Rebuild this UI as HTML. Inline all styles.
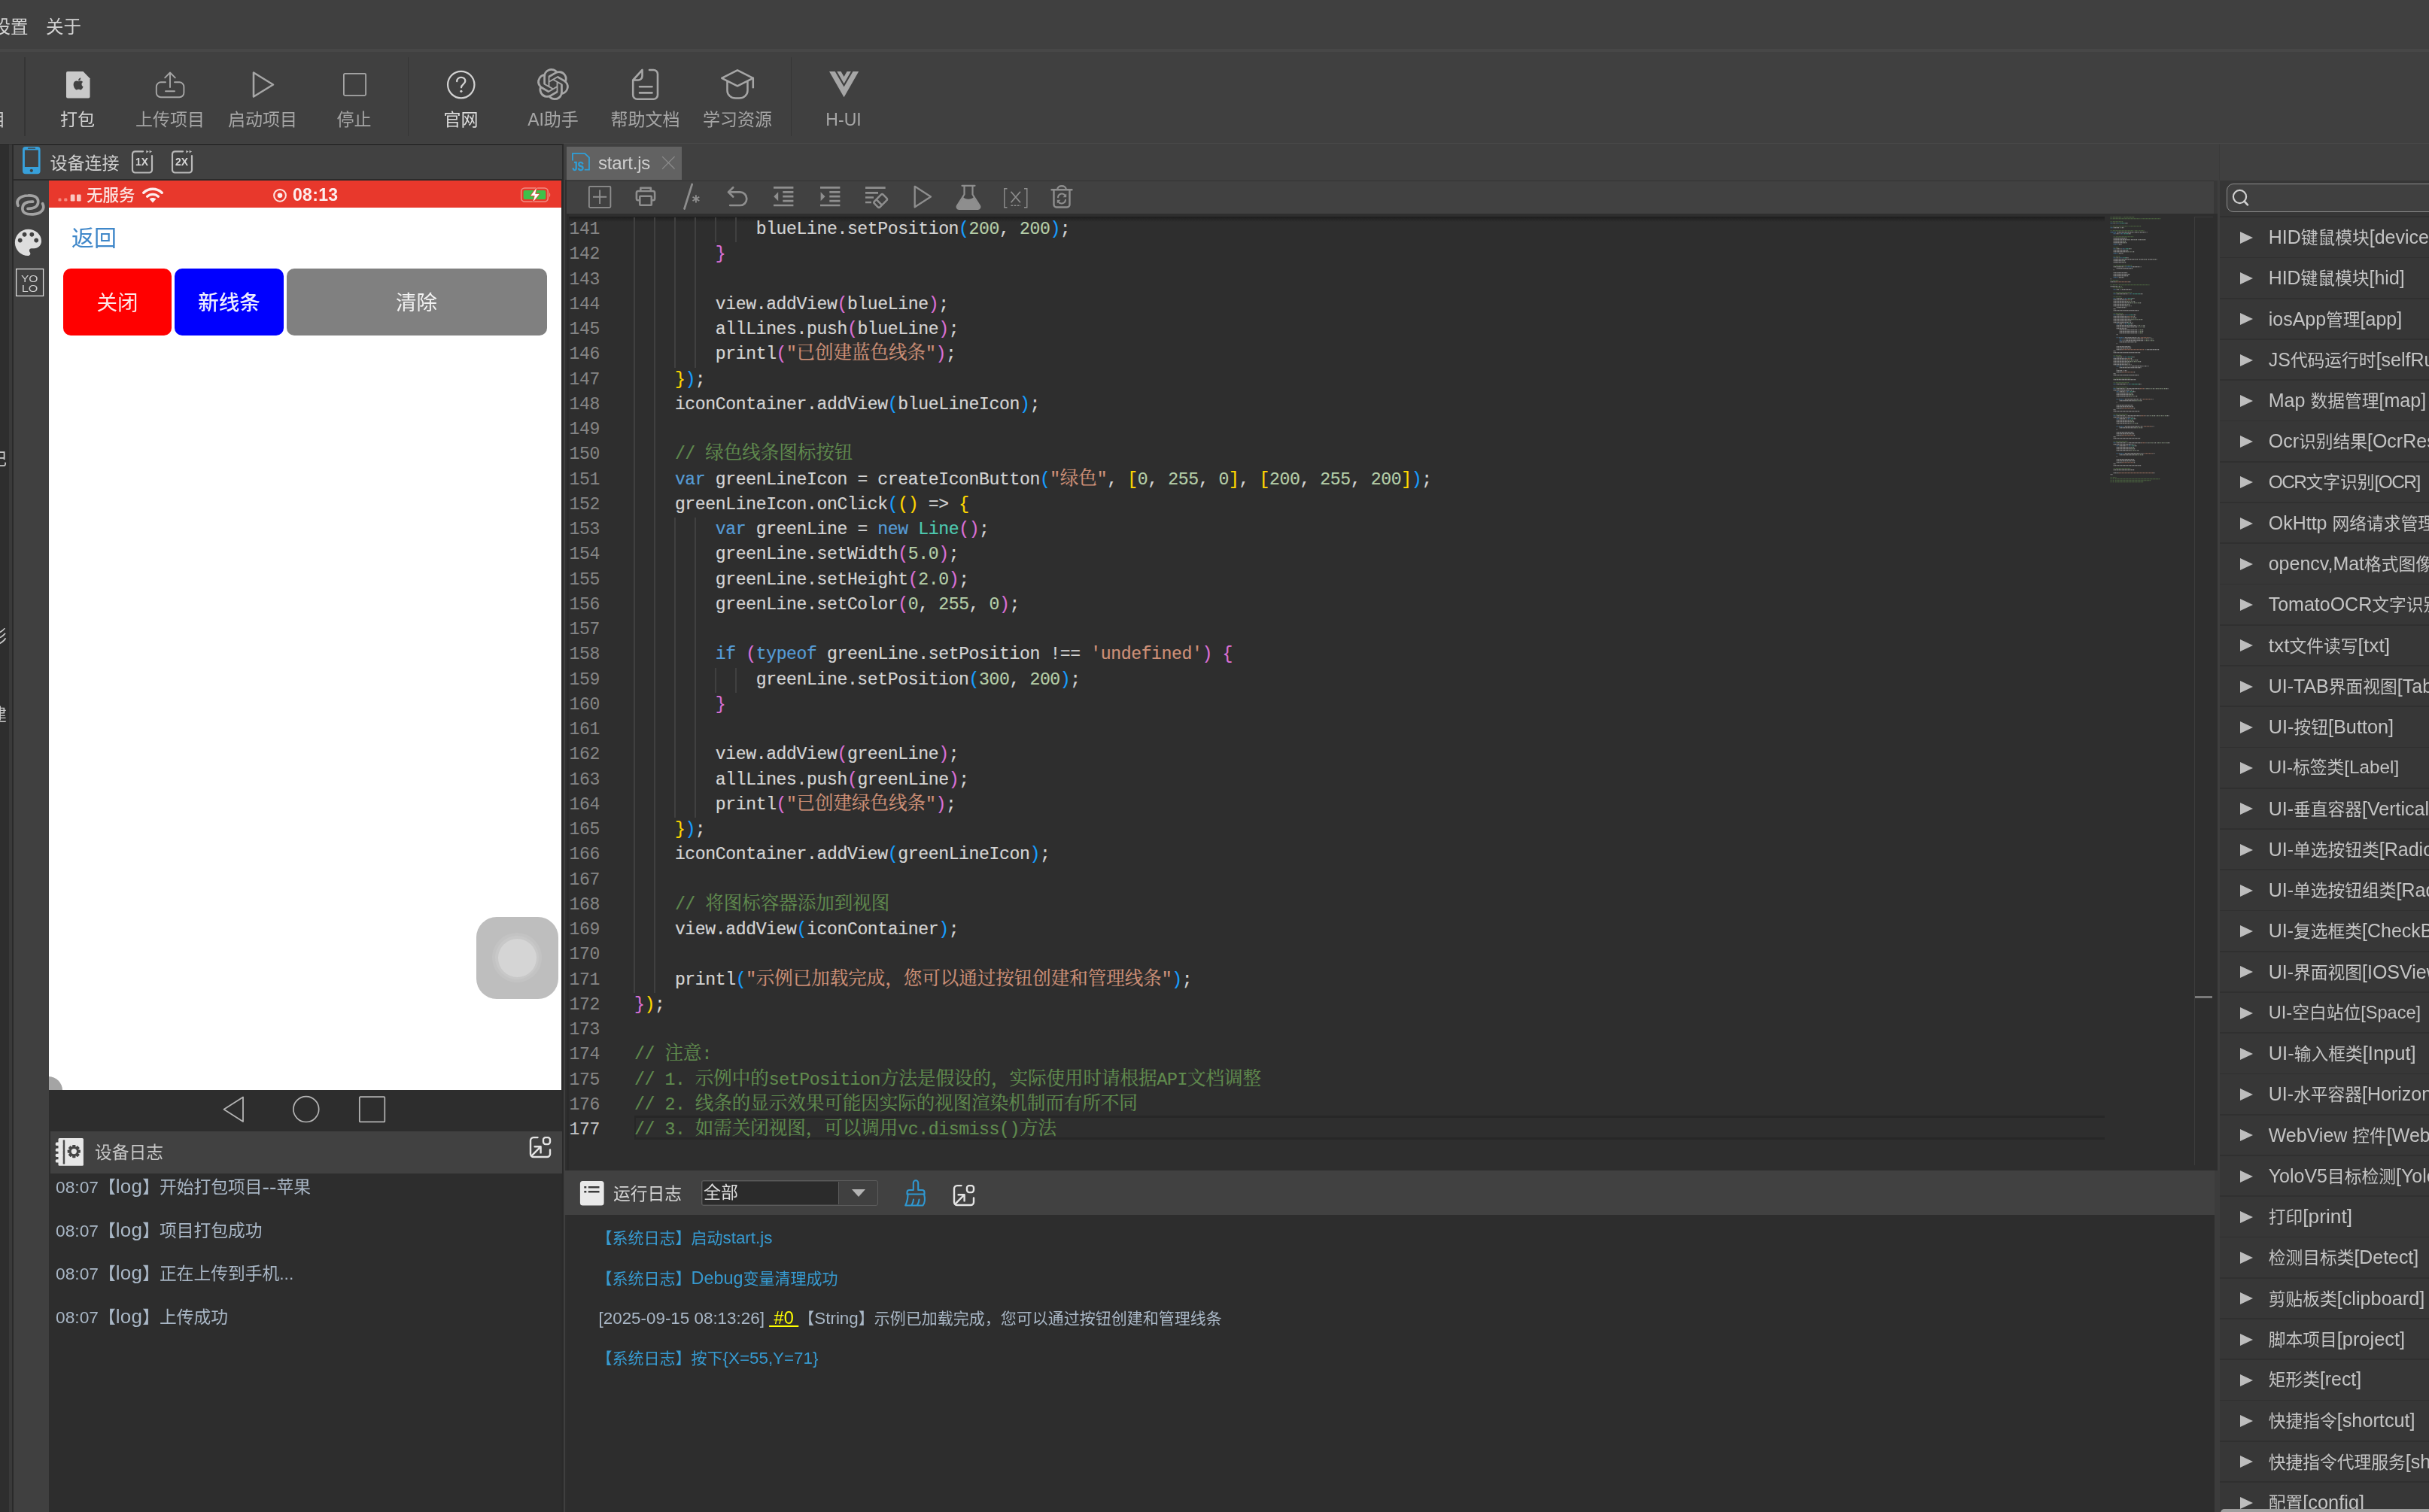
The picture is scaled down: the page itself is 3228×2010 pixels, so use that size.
<!DOCTYPE html>
<html lang="zh-CN"><head><meta charset="utf-8"><title>IDE</title>
<style>
html,body{margin:0;padding:0;}
body{width:3228px;height:2010px;overflow:hidden;background:#404040;position:relative;font-family:"Liberation Sans","Noto Sans CJK SC",sans-serif;color:#c8c8c8;}
.a{position:absolute;}
.t{position:absolute;white-space:nowrap;line-height:1;}
.ph{filter:blur(0.4px);}
svg{position:absolute;overflow:visible;}
.tb{position:absolute;white-space:nowrap;line-height:1;font-size:23px;color:#a6a6a6;transform:translateX(-50%);}
.code{position:absolute;left:843px;white-space:pre;font-family:"Liberation Mono","Noto Serif CJK SC",monospace;font-size:23.1px;letter-spacing:-0.387px;line-height:33.25px;height:33.25px;color:#d4d4d4;-webkit-text-stroke:0.2px;}
.code .z{font-family:"Noto Serif CJK SC",serif;font-size:24.5px;line-height:1;letter-spacing:0;}
.ln{position:absolute;left:740.5px;width:56.5px;text-align:right;font-family:"Liberation Mono","Noto Serif CJK SC",monospace;font-size:23.1px;letter-spacing:-0.387px;line-height:33.25px;height:33.25px;color:#858585;}
.k{color:#569cd6}.s{color:#ce9178}.n{color:#b5cea8}.c{color:#608b4e}.ty{color:#4ec9b0}
.b1{color:#ffd700}.b2{color:#da70d6}.b3{color:#179fff}
.g{position:absolute;width:1.75px;background:#404040;}
.row{position:absolute;left:2950px;width:278px;height:52.5px;background:#373737;}
.row .x{position:absolute;left:64.7px;top:0;height:52.5px;line-height:52.5px;font-size:22.75px;white-space:nowrap;color:#c4c4c4;}
.row i{position:absolute;left:27px;top:18.8px;width:0;height:0;border-left:17px solid #bdbdbd;border-top:8.5px solid transparent;border-bottom:8.5px solid transparent;}
.dl{position:absolute;left:74px;font-size:22.75px;line-height:1;white-space:nowrap;color:#a9b7c6;}
.rl{position:absolute;font-size:21px;line-height:1;white-space:nowrap;color:#369ad0;}
</style></head>
<body>
<div id="app" style="position:absolute;left:0;top:0;width:3228px;height:2010px;will-change:transform">
<div class="a" style="left:0;top:0;width:3228px;height:65px;background:#404040"></div>
<div class="t" style="left:-9.5px;top:24.5px;font-size:23.5px;color:#d2d2d2">设置</div>
<div class="t" style="left:61px;top:24.5px;font-size:23.5px;color:#d2d2d2">关于</div>
<div class="a" style="left:0;top:65px;width:3228px;height:3.5px;background:#474747"></div>
<div class="a" style="left:32px;top:76px;width:1.75px;height:105px;background:#353535"></div>
<div class="a" style="left:541.5px;top:76px;width:1.75px;height:105px;background:#353535"></div>
<div class="a" style="left:1050.5px;top:76px;width:1.75px;height:105px;background:#353535"></div>
<div class="t" style="left:-15.5px;top:147.5px;font-size:23px;color:#c8c8c8">目</div>
<div class="tb" style="left:103px;top:147.5px;color:#d0d0d0">打包</div>
<div class="tb" style="left:226px;top:147.5px;color:#a6a6a6">上传项目</div>
<div class="tb" style="left:349px;top:147.5px;color:#a6a6a6">启动项目</div>
<div class="tb" style="left:470.5px;top:147.5px;color:#a6a6a6">停止</div>
<div class="tb" style="left:612.5px;top:147.5px;color:#dcdcdc">官网</div>
<div class="tb" style="left:735px;top:147.5px;color:#a6a6a6">AI助手</div>
<div class="tb" style="left:857.5px;top:147.5px;color:#a6a6a6">帮助文档</div>
<div class="tb" style="left:980px;top:147.5px;color:#a6a6a6">学习资源</div>
<div class="tb" style="left:1121px;top:147.5px;color:#a6a6a6">H-UI</div>
<svg style="left:87.8px;top:94.6px" width="31.5" height="35.6" viewBox="0 0 31.5 35.6"><path d="M2 0H22.5L31.5 9.2V33.6a2 2 0 0 1-2 2H2a2 2 0 0 1-2-2V2a2 2 0 0 1 2-2z" fill="#c9c9c9"/><g transform="translate(8.2,8.6) scale(0.66)"><path d="M12.152 6.896c-.948 0-2.415-1.078-3.96-1.04-2.04.027-3.91 1.183-4.961 3.014-2.117 3.675-.546 9.103 1.519 12.09 1.013 1.454 2.208 3.09 3.792 3.039 1.52-.065 2.09-.987 3.935-.987 1.831 0 2.35.987 3.96.948 1.637-.026 2.676-1.48 3.676-2.948 1.156-1.688 1.636-3.325 1.662-3.415-.039-.013-3.182-1.221-3.22-4.857-.026-3.04 2.48-4.494 2.597-4.559-1.429-2.09-3.623-2.324-4.39-2.376-2-.156-3.675 1.09-4.61 1.09zM15.53 3.83c.843-1.012 1.4-2.427 1.245-3.83-1.207.052-2.662.805-3.532 1.818-.78.896-1.454 2.338-1.273 3.714 1.338.104 2.715-.688 3.559-1.701" fill="#404040"/></g></svg>
<svg style="left:205px;top:94px" width="42" height="38" viewBox="0 0 42 38"><g fill="none" stroke="#a6a6a6" stroke-width="1.9" stroke-linecap="round" stroke-linejoin="round"><path d="M15 15.3H8.8a6 6 0 0 0-6 6v8a6 6 0 0 0 6 6h24.6a6 6 0 0 0 6-6v-8a6 6 0 0 0-6-6H27"/><path d="M21 2.5V22M14.2 9.3L21 2.5l6.8 6.8M15 27.3h12"/></g></svg>
<svg style="left:334px;top:93px" width="32" height="39" viewBox="0 0 32 39"><path d="M3 3.5L29 19.5L3 35.5z" fill="none" stroke="#a6a6a6" stroke-width="2.6" stroke-linejoin="round"/></svg>
<svg style="left:455.5px;top:97px" width="31" height="30.7" viewBox="0 0 31 30.7"><rect x="0.9" y="0.9" width="29.2" height="28.9" rx="1.5" fill="none" stroke="#a6a6a6" stroke-width="1.8"/></svg>
<svg style="left:592.8px;top:92.8px" width="39.5" height="39.5" viewBox="0 0 39.5 39.5"><circle cx="19.75" cy="19.6" r="17.7" fill="none" stroke="#d2d2d2" stroke-width="2.2"/><path d="M14.2 15.2c0-3.3 2.4-5.4 5.6-5.4s5.5 2 5.5 4.9c0 4-5.3 4.2-5.3 8.6" fill="none" stroke="#d2d2d2" stroke-width="2.3" stroke-linecap="round"/><circle cx="19.9" cy="28.3" r="1.6" fill="#d2d2d2"/></svg>
<svg style="left:714.2px;top:91.3px" width="42" height="42" viewBox="0 0 24 24"><path d="M22.2819 9.8211a5.9847 5.9847 0 0 0-.5157-4.9108 6.0462 6.0462 0 0 0-6.5098-2.9A6.0651 6.0651 0 0 0 4.9807 4.1818a5.9847 5.9847 0 0 0-3.9977 2.9 6.0462 6.0462 0 0 0 .7427 7.0966 5.98 5.98 0 0 0 .511 4.9107 6.051 6.051 0 0 0 6.5146 2.9001A5.9847 5.9847 0 0 0 13.2599 24a6.0557 6.0557 0 0 0 5.7718-4.2058 5.9894 5.9894 0 0 0 3.9977-2.9001 6.0557 6.0557 0 0 0-.7475-7.0729zm-9.022 12.6081a4.4755 4.4755 0 0 1-2.8764-1.0408l.1419-.0804 4.7783-2.7582a.7948.7948 0 0 0 .3927-.6813v-6.7369l2.02 1.1686a.071.071 0 0 1 .038.052v5.5826a4.504 4.504 0 0 1-4.4945 4.4944zm-9.6607-4.1254a4.4708 4.4708 0 0 1-.5346-3.0137l.142.0852 4.783 2.7582a.7712.7712 0 0 0 .7806 0l5.8428-3.3685v2.3324a.0804.0804 0 0 1-.0332.0615L9.74 19.9502a4.4992 4.4992 0 0 1-6.1408-1.6464zM2.3408 7.8956a4.485 4.485 0 0 1 2.3655-1.9728V11.6a.7664.7664 0 0 0 .3879.6765l5.8144 3.3543-2.0201 1.1685a.0757.0757 0 0 1-.071 0l-4.8303-2.7865A4.504 4.504 0 0 1 2.3408 7.872zm16.5963 3.8558L13.1038 8.364 15.1192 7.2a.0757.0757 0 0 1 .071 0l4.8303 2.7913a4.4944 4.4944 0 0 1-.6765 8.1042v-5.6772a.79.79 0 0 0-.407-.667zm2.0107-3.0231l-.142-.0852-4.7735-2.7818a.7759.7759 0 0 0-.7854 0L9.409 9.2297V6.8974a.0662.0662 0 0 1 .0284-.0615l4.8303-2.7866a4.4992 4.4992 0 0 1 6.6802 4.66zM8.3065 12.863l-2.02-1.1638a.0804.0804 0 0 1-.038-.0567V6.0742a4.4992 4.4992 0 0 1 7.3757-3.4537l-.142.0805L8.704 5.459a.7948.7948 0 0 0-.3927.6813zm1.0976-2.3654l2.602-1.4998 2.6069 1.4998v2.9994l-2.5974 1.4997-2.6067-1.4997Z" fill="#a6a6a6"/></svg>
<svg style="left:838px;top:90px" width="40" height="45" viewBox="0 0 40 45"><g fill="none" stroke="#a6a6a6" stroke-width="2.6" stroke-linecap="round" stroke-linejoin="round"><path d="M25 3h5.5a5.5 5.5 0 0 1 5.5 5.5v27.7a5.500 5.500 0 0 1-5.500 5.500H8.700a5.500 5.500 0 0 1-5.500-5.500V16.500L15.500 3v8a5.500 5.500 0 0 1-5.500 5.500H3.500"/><path d="M12 25.200h16.500M12 33.400h16.500"/></g></svg>
<svg style="left:956px;top:90px" width="49" height="44" viewBox="0 0 49 44"><g fill="none" stroke="#a6a6a6" stroke-width="2.5" stroke-linecap="round" stroke-linejoin="round"><path d="M24 3.300L3.200 13.800L24 24.300L44.800 13.800z"/><path d="M10.500 18v12.500c0 5.500 5 10 11 10h5c6 0 11-4.500 11-10V18"/><path d="M44.800 13.800v12.500"/></g></svg>
<svg style="left:1102.4px;top:94.8px" width="39.2" height="34.2" viewBox="0 0 39.2 34.2"><path d="M0 0H7.700L19.600 20.500L31.500 0H39.200L19.600 34.200z" fill="#a6a6a6"/><path d="M10.300 0H15.600L19.600 7L23.600 0H28.900L19.600 16.200z" fill="#a6a6a6"/></svg>
<div class="a" style="left:0;top:189.8px;width:3228px;height:1.3px;background:#494949"></div>
<div class="a" style="left:0;top:191.1px;width:749.2px;height:2px;background:#292929"></div>
<div class="a" style="left:0;top:192px;width:11.7px;height:1818px;background:#2e2e2e"></div>
<div class="a" style="left:11.7px;top:192px;width:4.3px;height:1818px;background:#3a3a3a"></div>
<div class="a" style="left:16px;top:192px;width:1.6px;height:1818px;background:#2a2a2a"></div>
<div class="a" style="left:17.5px;top:193px;width:729.8px;height:45px;background:#414141"></div>
<div class="a" style="left:17.5px;top:238px;width:731.7px;height:2px;background:#2b2b2b"></div>
<div class="t" style="left:66.5px;top:205.5px;font-size:23px;color:#cfcfcf">设备连接</div>
<svg style="left:29.5px;top:195px" width="23.6" height="36.2" viewBox="0 0 23.6 36.2"><path fill-rule="evenodd" fill="#38a0da" d="M4 0H19.600a4 4 0 0 1 4 4V32.200a4 4 0 0 1-4 4H4a4 4 0 0 1-4-4V4a4 4 0 0 1 4-4zM2.900 4.600V27H20.900V4.600zM7.500 1.600a.6.6 0 0 0 0 1.200H16.500a.6.600 0 0 0 0-1.200zM11.800 29.700a2.100 2.100 0 1 0 .01 0z"/></svg>
<svg style="left:174.3px;top:198px" width="31" height="33" viewBox="0 0 31 33"><path d="M16 3.300H5.500a3.500 3.500 0 0 0-3.500 3.500V28a3.500 3.500 0 0 0 3.500 3.500H24.500a3.500 3.500 0 0 0 3.500-3.500V9" fill="none" stroke="#b9b9b9" stroke-width="2.2" stroke-linecap="round"/><path d="M20.300 1.800L23.800 3.600L20.300 5.400zM24.600 1.800L28.100 3.600L24.600 5.400z" fill="#b9b9b9"/><text x="14.600" y="21.900" font-family="Liberation Sans,sans-serif" font-size="14.500" font-weight="bold" text-anchor="middle" fill="#d6d6d6" textLength="17" lengthAdjust="spacingAndGlyphs">1X</text></svg>
<svg style="left:226.6px;top:198px" width="31" height="33" viewBox="0 0 31 33"><path d="M16 3.300H5.500a3.500 3.500 0 0 0-3.500 3.500V28a3.500 3.500 0 0 0 3.500 3.500H24.500a3.500 3.500 0 0 0 3.500-3.500V9" fill="none" stroke="#b9b9b9" stroke-width="2.2" stroke-linecap="round"/><path d="M20.300 1.800L23.800 3.600L20.300 5.400zM24.600 1.800L28.100 3.600L24.600 5.400z" fill="#b9b9b9"/><text x="14.600" y="21.900" font-family="Liberation Sans,sans-serif" font-size="14.500" font-weight="bold" text-anchor="middle" fill="#d6d6d6" textLength="17" lengthAdjust="spacingAndGlyphs">2X</text></svg>
<div class="a" style="left:17.5px;top:240px;width:47.5px;height:1770px;background:#404040"></div>
<svg style="left:17.5px;top:255px" width="47" height="36" viewBox="0 0 47 36"><g fill="none" stroke="#a2a2a2" stroke-width="3.700" stroke-linecap="round"><path d="M6 18.300C2.500 10.500 9 5.200 19 5C29 4.500 33.500 8 32.600 14.800C31.800 20.500 25.500 22.500 19 22.300"/><path d="M38.600 15.700C42.500 23.500 36 29.500 26 29.800C16 30.200 11 27.500 12 20.700C12.800 15 19 13 25.700 13.200"/></g></svg>
<svg style="left:13.6px;top:298.7px" width="46.92" height="46.92" viewBox="0 0 24 24"><path d="M12 3c-4.97 0-9 4.03-9 9s4.03 9 9 9c.83 0 1.5-.67 1.5-1.5 0-.39-.15-.74-.39-1.01-.23-.26-.38-.61-.38-.99 0-.83.67-1.5 1.5-1.5H16c2.76 0 5-2.24 5-5 0-4.42-4.03-8-9-8zm-5.5 9c-.83 0-1.5-.67-1.5-1.5S5.67 9 6.5 9 8 9.67 8 10.5 7.33 12 6.5 12zm3-4C8.67 8 8 7.33 8 6.5S8.67 5 9.5 5s1.5.67 1.5 1.5S10.33 8 9.5 8zm5 0c-.83 0-1.5-.67-1.5-1.5S13.67 5 14.5 5s1.5.67 1.5 1.5S15.33 8 14.5 8zm3 4c-.83 0-1.5-.67-1.5-1.5S16.67 9 17.5 9s1.5.67 1.5 1.5-.67 1.5-1.5 1.5z" fill="#dddddd"/></svg>
<svg style="left:21px;top:357.2px" width="37.2" height="37" viewBox="0 0 37.2 37"><rect x="0.600" y="0.600" width="36" height="35.800" fill="none" stroke="#dadada" stroke-width="1.300"/><text x="18.200" y="17.800" font-family="Liberation Sans,sans-serif" font-size="13" text-anchor="middle" fill="#cdcdcd" textLength="22.600" lengthAdjust="spacingAndGlyphs">YO</text><text x="18.600" y="31.100" font-family="Liberation Sans,sans-serif" font-size="13" text-anchor="middle" fill="#cdcdcd" textLength="21.500" lengthAdjust="spacingAndGlyphs">LO</text></svg>
<div class="a" style="left:65px;top:240px;width:681px;height:1209px;background:#fff"></div>
<div class="a" style="left:65px;top:240px;width:681px;height:36px;background:#e8382c"></div>
<div class="t ph" style="left:115px;top:249.5px;font-size:21.5px;color:#fbe4e1;font-weight:500">无服务</div>
<div class="t ph" style="left:389px;top:248.4px;font-size:23px;color:#fdeeee;font-weight:bold;letter-spacing:0.3px">08:13</div>
<svg style="left:77px;top:250px" width="32" height="19" viewBox="0 0 32 19"><g fill="#f58a80"><rect x="0.500" y="13.400" width="4" height="4.200" rx="1.300"/><rect x="8.200" y="13.400" width="4.200" height="4.200" rx="1.300"/></g><g fill="#fac6c0"><rect x="16.700" y="8.400" width="5.800" height="9.200" rx="1.400"/><rect x="25" y="8.400" width="5.600" height="9.200" rx="1.400"/></g></svg>
<svg style="left:188px;top:248px" width="30" height="23" viewBox="0 0 30 23"><g fill="none" stroke="#fdeeee" stroke-linecap="round"><path d="M2.800 8.200C9.500 1.500 20.500 1.500 27.200 8.200" stroke-width="3.400"/><path d="M7.600 13.200C11.800 9.300 18.200 9.300 22.400 13.200" stroke-width="3.300"/></g><path d="M15 21.500L10.600 16.600C13 14.600 17 14.600 19.400 16.600z" fill="#fdeeee"/></svg>
<svg style="left:361.5px;top:250px" width="20" height="20" viewBox="0 0 20 20"><circle cx="10" cy="9.800" r="7.900" fill="none" stroke="#fde3e0" stroke-width="2"/><circle cx="10" cy="9.800" r="3.300" fill="#fdeeee"/></svg>
<svg style="left:691px;top:247.5px" width="42" height="22" viewBox="0 0 42 22"><rect x="1.700" y="2" width="35.500" height="18" rx="4.500" fill="none" stroke="#f08a80" stroke-width="1.600"/><rect x="4.600" y="4.900" width="29.700" height="12.200" rx="2.200" fill="#3fc04a"/><path d="M39 8v6c1.600-.5 1.600-5.500 0-6z" fill="#f08a80"/><path d="M23 -0.200L13.500 12.500H19.200L16.500 22.200L26.600 9.400H20.700z" fill="#fff" stroke="#e8382c" stroke-width="0.900"/></svg>
<div class="t ph" style="left:95px;top:301.5px;font-size:30px;color:#3f87c9">返回</div>
<div class="a" style="left:84px;top:356.5px;width:144px;height:89.5px;border-radius:10px;background:#ff0000"></div>
<div class="a" style="left:232px;top:356.5px;width:145px;height:89.5px;border-radius:10px;background:#0000ff"></div>
<div class="a" style="left:381px;top:356.5px;width:346px;height:89.5px;border-radius:10px;background:#808080"></div>
<div class="t ph" style="left:156px;top:388.5px;font-size:27.5px;color:#fde8e8;transform:translateX(-50%)">关闭</div>
<div class="t ph" style="left:304.5px;top:388.5px;font-size:27.5px;color:#ececff;font-weight:500;transform:translateX(-50%)">新线条</div>
<div class="t ph" style="left:553.5px;top:388.5px;font-size:27.5px;color:#f2f2f2;transform:translateX(-50%)">清除</div>
<div class="a" style="left:633.3px;top:1218.7px;width:108.4px;height:109.3px;border-radius:27px;background:#bebebe"></div>
<div class="a" style="left:654.4px;top:1240.3px;width:66px;height:66px;border-radius:50%;background:#c3c3c3"></div>
<div class="a" style="left:658.4px;top:1244.3px;width:58px;height:58px;border-radius:50%;background:#c8c8c8"></div>
<div class="a" style="left:661.9px;top:1247.8px;width:51px;height:51px;border-radius:50%;background:#d5d5d5"></div>
<div class="a" style="left:65px;top:1430px;width:18px;height:19px;overflow:hidden"><div class="a" style="left:-19px;top:1px;width:37px;height:37px;border-radius:50%;background:#a4a4a4"></div></div>
<div class="a" style="left:65px;top:1449px;width:681px;height:55px;background:#2d2d2d"></div>
<svg style="left:294px;top:1455px" width="33" height="40" viewBox="0 0 33 40"><path d="M29 3.500V36L3.500 19.800z" fill="none" stroke="#b4b4b4" stroke-width="1.800" stroke-linejoin="round"/></svg>
<svg style="left:387px;top:1455px" width="40" height="40" viewBox="0 0 40 40"><circle cx="19.800" cy="19.600" r="16.900" fill="none" stroke="#b4b4b4" stroke-width="1.700"/></svg>
<svg style="left:476px;top:1456px" width="38" height="38" viewBox="0 0 38 38"><rect x="1.800" y="2.200" width="33.500" height="33.200" rx="1" fill="none" stroke="#b4b4b4" stroke-width="1.700"/></svg>
<div class="a" style="left:65px;top:1504px;width:681px;height:506px;background:#2d2d2d"></div>
<div class="a" style="left:67px;top:1504px;width:679px;height:55.5px;background:#414141"></div>
<div class="t" style="left:126px;top:1520.5px;font-size:22.75px;color:#c8c8c8">设备日志</div>
<svg style="left:73px;top:1512px" width="39" height="39" viewBox="0 0 39 39"><rect x="4.500" y="1" width="33.400" height="36.800" rx="1.500" fill="#e7e7e7"/><rect x="10.700" y="3.500" width="2.500" height="32" fill="#4a4a4a"/><g fill="#e7e7e7"><rect x="0.800" y="6.600" width="9.500" height="4.300" rx="1.500"/><rect x="0.800" y="14.400" width="9.500" height="4.300" rx="1.500"/><rect x="0.800" y="21.800" width="9.500" height="4.300" rx="1.500"/><rect x="0.800" y="29.200" width="9.500" height="4.300" rx="1.500"/></g><g transform="translate(25.300,18.600)"><g fill="#454545"><rect x="-2.200" y="-8.600" width="4.400" height="17.200" rx="0.800" transform="rotate(0)"/><rect x="-2.200" y="-8.600" width="4.400" height="17.200" rx="0.800" transform="rotate(45)"/><rect x="-2.200" y="-8.600" width="4.400" height="17.200" rx="0.800" transform="rotate(90)"/><rect x="-2.200" y="-8.600" width="4.400" height="17.200" rx="0.800" transform="rotate(135)"/><circle r="6.300"/></g><circle r="3.600" fill="#e7e7e7"/></g></svg>
<svg style="left:703px;top:1509.8px" width="31" height="31" viewBox="0 0 31 31"><g fill="none" stroke="#e4e4e4" stroke-width="2.4" stroke-linecap="round" stroke-linejoin="round"><path d="M11.500 2.100H6a4 4 0 0 0-4 4V24a4 4 0 0 0 4 4H24a4 4 0 0 0 4-4V18.500"/><rect x="19" y="2.100" width="9" height="9" rx="3"/><path d="M3.600 26.400L15.200 14.700M7.600 14.300H15.600V22.400"/></g></svg>
<div class="dl" style="top:1564.2px">08:07【<span style="font-size:26px;letter-spacing:0.3px">log</span>】开始打包项目<span style="font-size:28.5px;line-height:0;position:relative;top:1.2px">--</span>苹果</div>
<div class="dl" style="top:1621.8px">08:07【<span style="font-size:26px;letter-spacing:0.3px">log</span>】项目打包成功</div>
<div class="dl" style="top:1679.4px">08:07【<span style="font-size:26px;letter-spacing:0.3px">log</span>】正在上传到手机...</div>
<div class="dl" style="top:1737.0px">08:07【<span style="font-size:26px;letter-spacing:0.3px">log</span>】上传成功</div>
<div class="t" style="left:-14px;top:599px;font-size:23px;color:#c8c8c8">记</div>
<div class="t" style="left:-14px;top:834.5px;font-size:23px;color:#c8c8c8">形</div>
<div class="t" style="left:-14px;top:938.5px;font-size:23px;color:#c8c8c8">建</div>
<div class="a" style="left:746px;top:240px;width:1.5px;height:1770px;background:#2c2c2c"></div>
<div class="a" style="left:747.3px;top:191.1px;width:1.9px;height:1819px;background:#2a2a2a"></div>
<div class="a" style="left:749.2px;top:193px;width:1.8px;height:1817px;background:#3f3f3f"></div>
<div class="a" style="left:751px;top:239px;width:1.7px;height:1771px;background:#2f2f2f"></div>
<div class="a" style="left:746px;top:1504px;width:1.4px;height:55.5px;background:#414141"></div>
<div class="a" style="left:752.5px;top:192px;width:2189.5px;height:48px;background:#404040"></div>
<div class="a" style="left:752.5px;top:195px;width:153.5px;height:44px;background:#626262"></div>
<div class="t" style="left:795px;top:205px;font-size:24px;letter-spacing:-0.2px;color:#cfcfcf">start.js</div>
<svg style="left:758px;top:201px" width="28" height="28" viewBox="0 0 28 28"><path d="M2.900 12.400V3.200H19.300L25 8.500V24.600H18.700" fill="none" stroke="#2f9fd8" stroke-width="1.800"/><text x="10.300" y="25.500" font-family="Liberation Sans,sans-serif" font-weight="bold" font-size="16.800" text-anchor="middle" fill="#2f9fd8" stroke="#2f9fd8" stroke-width="0.400" textLength="15.600" lengthAdjust="spacingAndGlyphs">JS</text></svg>
<svg style="left:879px;top:207px" width="19" height="19" viewBox="0 0 19 19"><path d="M1.100 1.100L17.600 17.600M17.600 1.100L1.100 17.600" stroke="#8c8c8c" stroke-width="1.300"/></svg>
<div class="a" style="left:752.5px;top:239.5px;width:2189.5px;height:1px;background:#333"></div>
<div class="a" style="left:752.5px;top:240.5px;width:2189.5px;height:43.5px;background:#414141"></div>
<svg style="left:780.6px;top:245.6px" width="32.4" height="31.6" viewBox="0 0 32.4 31.6"><rect x="1.900" y="1.900" width="28.500" height="27.900" rx="1.200" fill="none" stroke="#8e8e8e" stroke-width="1.800"/><path d="M7 15.800H25.200M16.100 6.600V24.900" stroke="#8e8e8e" stroke-width="1.900"/></svg>
<svg style="left:843px;top:247px" width="30" height="29" viewBox="0 0 30 29"><g fill="none" stroke="#8e8e8e" stroke-width="2.600" stroke-linejoin="round"><path d="M8.300 7V2.800H21.800V7"/><rect x="2.900" y="7" width="24.200" height="12.300" rx="2.300"/><rect x="7.300" y="13.800" width="15.500" height="12" rx="0.800" fill="#414141"/></g></svg>
<svg style="left:905px;top:242px" width="30" height="38" viewBox="0 0 30 38"><path d="M14.700 3L4.500 35.500" stroke="#8e8e8e" stroke-width="2.700" stroke-linecap="round"/><path d="M19.900 17.300V27.500M15.500 19.800L24.300 25M24.300 19.800L15.500 25" stroke="#8e8e8e" stroke-width="1.900"/></svg>
<svg style="left:964px;top:245px" width="33" height="31" viewBox="0 0 33 31"><g fill="none" stroke="#8e8e8e" stroke-width="2.700" stroke-linecap="round" stroke-linejoin="round"><path d="M4.200 10.400H19.500a8.800 8.800 0 0 1 0 17.600H6.200"/><path d="M10.200 4.300L4 10.400L10.200 16.500"/></g></svg>
<svg style="left:1028.2px;top:248.2px" width="27" height="27" viewBox="0 0 27 27"><path d="M0 1.400H26.400M12.300 7.300H26.400M12.300 13.200H26.400M12.300 19.100H26.400M0 25H26.400" stroke="#8e8e8e" stroke-width="2.700"/><path d="M6.200 7.300V19.200L0.300 13.200z" fill="#8e8e8e"/></svg>
<svg style="left:1089.5px;top:248.2px" width="27" height="27" viewBox="0 0 27 27"><path d="M0 1.400H26.400M12.300 7.300H26.400M12.300 13.200H26.400M12.300 19.100H26.400M0 25H26.400" stroke="#8e8e8e" stroke-width="2.700"/><path d="M0.600 7.300V19.200L6.500 13.200z" fill="#8e8e8e"/></svg>
<svg style="left:1149px;top:247px" width="30" height="32" viewBox="0 0 30 32"><path d="M1 2.700H27.700M1 9.400H18M1 15.500H12M1 22H9" stroke="#8e8e8e" stroke-width="2.700"/><g transform="translate(21.200,20) rotate(-45)" fill="none" stroke="#8e8e8e" stroke-width="2.500"><rect x="-8.300" y="-5.300" width="16.600" height="10.600" rx="2.200"/><path d="M-2.700 -5.300V5.300"/></g></svg>
<svg style="left:1213px;top:245px" width="27" height="33" viewBox="0 0 27 33"><path d="M2.700 2.800L24 16.500L2.700 30.300z" fill="none" stroke="#8e8e8e" stroke-width="2.300" stroke-linejoin="round"/></svg>
<svg style="left:1269.5px;top:245px" width="34" height="34" viewBox="0 0 34 34"><path d="M8.500 1.800H25.500" stroke="#8e8e8e" stroke-width="2.200" stroke-linecap="round"/><path d="M11.500 2V13.500L2 28.500a3 3 0 0 0 2.700 4.500H29.300a3 3 0 0 0 2.700-4.500L22.500 13.500V2" fill="none" stroke="#8e8e8e" stroke-width="2.200" stroke-linejoin="round"/><path d="M10 17C13 20.500 21 20.500 24 17L32 29.500a2.500 2.500 0 0 1-2.500 3.500H4.500A2.500 2.500 0 0 1 2 29.500z" fill="#8e8e8e"/></svg>
<svg style="left:1333px;top:249px" width="34" height="29" viewBox="0 0 34 29"><g fill="none" stroke="#8e8e8e" stroke-width="1.400"><path d="M5.500 1.800H1.800V26.700H5.500M28 1.800H31.800V26.700H28"/><path d="M10.500 5.800L23 20.300M23 5.800L10.500 20.300" stroke-width="1.700"/><path d="M10.500 24.200H23.500" stroke-dasharray="2.700 1.500" stroke-width="1.600"/></g></svg>
<svg style="left:1395px;top:244px" width="32" height="34" viewBox="0 0 32 34"><g fill="none" stroke="#8e8e8e" stroke-width="2.400" stroke-linecap="round" stroke-linejoin="round"><path d="M2.500 8.200H29.500M10.300 7.800C10.300 1.800 21.700 1.800 21.700 7.800M5.500 8.500V28a3.500 3.500 0 0 0 3.500 3.500H23a3.500 3.500 0 0 0 3.500-3.500V8.500"/><path d="M11 18.300a5.200 5.200 0 0 1 9.400-2.600M21 21.800a5.200 5.200 0 0 1-9.400 2.500" stroke-width="2"/></g><path d="M22.200 13.500V18.300H17.500zM9.800 26.500V21.700H14.500z" fill="#8e8e8e"/></svg>
<div class="a" style="left:752.5px;top:284px;width:2194px;height:1271.5px;background:#2e2e2e"></div>
<div class="a" style="left:2941.5px;top:240px;width:5px;height:44px;background:#383838"></div>
<div class="a" style="left:752.5px;top:284px;width:3px;height:1272px;background:#2a2a2a"></div>
<!--CODE-->
<svg style="left:0;top:0;opacity:0.7" width="3228" height="700" viewBox="0 0 3228 700"><path d="M2808.7 296.8h1.8M2811.7 296.8h0.8M2824.7 296.8h2.8M2808.7 302.8h7.8M2817.7 302.8h0.8M2819.7 302.8h2.8M2813.7 308.8h15.8M2829.7 308.8h0.8M2830.7 308.8h3.8M2834.7 308.8h0.8M2836.7 308.8h4.8M2841.7 308.8h0.8M2843.7 308.8h6.8M2850.7 308.8h0.8M2852.7 308.8h0.8M2812.7 310.8h2.8M2816.7 310.8h0.8M2828.7 310.8h2.8M2808.7 316.8h2.8M2811.7 316.8h0.8M2812.7 316.8h6.8M2819.7 316.8h0.8M2820.7 316.8h3.8M2824.7 316.8h1.8M2808.7 318.8h2.8M2811.7 318.8h0.8M2812.7 318.8h7.8M2820.7 318.8h0.8M2821.7 318.8h4.8M2826.7 318.8h0.8M2828.7 318.8h1.8M2831.7 318.8h4.8M2836.7 318.8h0.8M2838.7 318.8h1.8M2841.7 318.8h4.8M2846.7 318.8h0.8M2848.7 318.8h2.8M2808.7 320.8h2.8M2811.7 320.8h0.8M2812.7 320.8h7.8M2820.7 320.8h0.8M2823.7 320.8h1.8M2808.7 322.8h2.8M2811.7 322.8h0.8M2812.7 322.8h8.8M2821.7 322.8h0.8M2824.7 322.8h1.8M2815.7 324.8h2.8M2818.7 324.8h0.8M2812.7 330.8h4.8M2818.7 330.8h0.8M2829.7 330.8h2.8M2808.7 332.8h4.8M2813.7 332.8h0.8M2814.7 332.8h6.8M2821.7 332.8h0.8M2822.7 332.8h3.8M2826.7 332.8h1.8M2808.7 334.8h4.8M2813.7 334.8h0.8M2814.7 334.8h11.8M2826.7 334.8h0.8M2828.7 334.8h0.8M2831.7 334.8h0.8M2834.7 334.8h1.8M2815.7 336.8h4.8M2820.7 336.8h0.8M2812.7 342.8h1.8M2815.7 342.8h0.8M2825.7 342.8h2.8M2808.7 344.8h1.8M2810.7 344.8h0.8M2811.7 344.8h17.8M2829.7 344.8h0.8M2830.7 344.8h6.8M2837.7 344.8h0.8M2839.7 344.8h1.8M2842.7 344.8h6.8M2849.7 344.8h0.8M2851.7 344.8h1.8M2854.7 344.8h6.8M2861.7 344.8h0.8M2863.7 344.8h2.8M2808.7 346.8h1.8M2810.7 346.8h0.8M2811.7 346.8h7.8M2819.7 346.8h0.8M2822.7 346.8h1.8M2808.7 348.8h1.8M2810.7 348.8h0.8M2811.7 348.8h8.8M2820.7 348.8h0.8M2823.7 348.8h1.8M2808.7 354.8h5.8M2814.7 354.8h0.8M2815.7 354.8h6.8M2823.7 354.8h0.8M2833.7 354.8h0.8M2834.7 354.8h7.8M2842.7 354.8h0.8M2844.7 354.8h0.8M2812.7 356.8h2.8M2815.7 356.8h0.8M2816.7 356.8h6.8M2823.7 356.8h0.8M2824.7 356.8h7.8M2832.7 356.8h1.8M2808.7 358.8h0.8M2808.7 362.8h5.8M2814.7 362.8h0.8M2815.7 362.8h6.8M2822.7 362.8h0.8M2823.7 362.8h1.8M2825.7 362.8h1.8M2808.7 364.8h5.8M2814.7 364.8h0.8M2815.7 364.8h6.8M2822.7 364.8h0.8M2823.7 364.8h4.8M2828.7 364.8h1.8M2808.7 366.8h5.8M2814.7 366.8h0.8M2815.7 366.8h6.8M2822.7 366.8h0.8M2823.7 366.8h2.8M2826.7 366.8h1.8M2815.7 368.8h5.8M2821.7 368.8h0.8M2804.7 370.8h0.8M2804.7 374.8h5.8M2810.7 374.8h0.8M2829.7 374.8h1.8M2804.7 380.8h1.8M2806.7 380.8h0.8M2807.7 380.8h3.8M2811.7 380.8h2.8M2815.7 380.8h1.8M2818.7 380.8h0.8M2812.7 384.8h3.8M2817.7 384.8h0.8M2819.7 384.8h1.8M2821.7 384.8h0.8M2822.7 384.8h6.8M2829.7 384.8h2.8M2812.7 390.8h14.8M2828.7 390.8h0.8M2844.7 390.8h2.8M2812.7 396.8h7.8M2821.7 396.8h0.8M2833.7 396.8h2.8M2808.7 398.8h7.8M2816.7 398.8h0.8M2817.7 398.8h6.8M2824.7 398.8h0.8M2831.7 398.8h1.8M2808.7 400.8h7.8M2816.7 400.8h0.8M2817.7 400.8h7.8M2825.7 400.8h0.8M2829.7 400.8h0.8M2832.7 400.8h0.8M2835.7 400.8h1.8M2808.7 402.8h7.8M2816.7 402.8h0.8M2817.7 402.8h11.8M2829.7 402.8h0.8M2833.7 402.8h0.8M2838.7 402.8h0.8M2843.7 402.8h1.8M2808.7 404.8h7.8M2816.7 404.8h0.8M2817.7 404.8h7.8M2825.7 404.8h0.8M2828.7 404.8h1.8M2808.7 406.8h7.8M2816.7 406.8h0.8M2817.7 406.8h6.8M2824.7 406.8h2.8M2828.7 406.8h1.8M2831.7 406.8h0.8M2812.7 408.8h1.8M2814.7 408.8h0.8M2815.7 408.8h6.8M2822.7 408.8h2.8M2808.7 410.8h2.8M2808.7 412.8h14.8M2823.7 412.8h0.8M2824.7 412.8h6.8M2831.7 412.8h0.8M2832.7 412.8h7.8M2840.7 412.8h1.8M2812.7 418.8h9.8M2823.7 418.8h0.8M2835.7 418.8h2.8M2808.7 420.8h9.8M2818.7 420.8h0.8M2819.7 420.8h6.8M2826.7 420.8h0.8M2835.7 420.8h1.8M2808.7 422.8h9.8M2818.7 422.8h0.8M2819.7 422.8h7.8M2827.7 422.8h0.8M2829.7 422.8h0.8M2832.7 422.8h0.8M2837.7 422.8h1.8M2808.7 424.8h9.8M2818.7 424.8h0.8M2819.7 424.8h11.8M2831.7 424.8h0.8M2835.7 424.8h0.8M2840.7 424.8h0.8M2845.7 424.8h1.8M2808.7 426.8h9.8M2818.7 426.8h0.8M2819.7 426.8h7.8M2827.7 426.8h0.8M2830.7 426.8h1.8M2808.7 428.8h9.8M2818.7 428.8h0.8M2819.7 428.8h6.8M2826.7 428.8h2.8M2830.7 428.8h1.8M2833.7 428.8h0.8M2816.7 430.8h3.8M2821.7 430.8h0.8M2831.7 430.8h2.8M2812.7 432.8h3.8M2816.7 432.8h0.8M2817.7 432.8h7.8M2825.7 432.8h0.8M2826.7 432.8h3.8M2830.7 432.8h0.8M2831.7 432.8h5.8M2837.7 432.8h1.8M2840.7 432.8h0.8M2845.7 432.8h0.8M2848.7 432.8h1.8M2812.7 434.8h3.8M2816.7 434.8h0.8M2817.7 434.8h8.8M2826.7 434.8h0.8M2827.7 434.8h3.8M2831.7 434.8h0.8M2832.7 434.8h5.8M2838.7 434.8h1.8M2841.7 434.8h0.8M2845.7 434.8h0.8M2848.7 434.8h1.8M2812.7 436.8h3.8M2816.7 436.8h0.8M2817.7 436.8h7.8M2825.7 436.8h0.8M2816.7 438.8h3.8M2820.7 438.8h0.8M2821.7 438.8h4.8M2826.7 438.8h0.8M2827.7 438.8h3.8M2831.7 438.8h0.8M2832.7 438.8h5.8M2838.7 438.8h1.8M2841.7 438.8h0.8M2846.7 438.8h1.8M2816.7 440.8h3.8M2820.7 440.8h0.8M2821.7 440.8h4.8M2826.7 440.8h0.8M2827.7 440.8h3.8M2831.7 440.8h0.8M2832.7 440.8h5.8M2838.7 440.8h1.8M2841.7 440.8h0.8M2846.7 440.8h1.8M2816.7 442.8h3.8M2820.7 442.8h0.8M2821.7 442.8h4.8M2826.7 442.8h0.8M2827.7 442.8h3.8M2831.7 442.8h0.8M2832.7 442.8h5.8M2838.7 442.8h1.8M2841.7 442.8h0.8M2846.7 442.8h0.8M2812.7 444.8h1.8M2815.7 448.8h0.8M2823.7 448.8h3.8M2827.7 448.8h0.8M2828.7 448.8h10.8M2840.7 448.8h2.8M2855.7 448.8h0.8M2857.7 448.8h0.8M2820.7 450.8h0.8M2822.7 450.8h0.8M2824.7 450.8h3.8M2828.7 450.8h0.8M2829.7 450.8h4.8M2834.7 450.8h0.8M2835.7 450.8h3.8M2839.7 450.8h0.8M2840.7 450.8h5.8M2846.7 450.8h1.8M2849.7 450.8h0.8M2854.7 450.8h0.8M2856.7 450.8h0.8M2860.7 450.8h0.8M2820.7 452.8h0.8M2822.7 452.8h0.8M2824.7 452.8h3.8M2828.7 452.8h0.8M2829.7 452.8h4.8M2834.7 452.8h0.8M2835.7 452.8h3.8M2839.7 452.8h0.8M2840.7 452.8h5.8M2846.7 452.8h1.8M2849.7 452.8h0.8M2854.7 452.8h0.8M2856.7 452.8h0.8M2861.7 452.8h0.8M2816.7 454.8h3.8M2820.7 454.8h0.8M2821.7 454.8h10.8M2832.7 454.8h0.8M2833.7 454.8h0.8M2834.7 454.8h0.8M2836.7 454.8h0.8M2837.7 454.8h1.8M2812.7 456.8h0.8M2812.7 460.8h3.8M2816.7 460.8h0.8M2817.7 460.8h6.8M2824.7 460.8h0.8M2825.7 460.8h3.8M2829.7 460.8h1.8M2812.7 462.8h7.8M2820.7 462.8h0.8M2821.7 462.8h3.8M2825.7 462.8h0.8M2826.7 462.8h3.8M2830.7 462.8h1.8M2812.7 464.8h5.8M2818.7 464.8h0.8M2850.7 464.8h0.8M2852.7 464.8h7.8M2860.7 464.8h0.8M2861.7 464.8h5.8M2867.7 464.8h1.8M2808.7 466.8h2.8M2808.7 468.8h14.8M2823.7 468.8h0.8M2824.7 468.8h6.8M2831.7 468.8h0.8M2832.7 468.8h9.8M2842.7 468.8h1.8M2812.7 474.8h7.8M2821.7 474.8h0.8M2833.7 474.8h2.8M2808.7 476.8h7.8M2816.7 476.8h0.8M2817.7 476.8h6.8M2824.7 476.8h0.8M2831.7 476.8h1.8M2808.7 478.8h7.8M2816.7 478.8h0.8M2817.7 478.8h7.8M2825.7 478.8h0.8M2829.7 478.8h0.8M2834.7 478.8h0.8M2839.7 478.8h1.8M2808.7 480.8h7.8M2816.7 480.8h0.8M2817.7 480.8h11.8M2829.7 480.8h0.8M2833.7 480.8h0.8M2838.7 480.8h0.8M2843.7 480.8h1.8M2808.7 482.8h7.8M2816.7 482.8h0.8M2817.7 482.8h7.8M2825.7 482.8h0.8M2828.7 482.8h1.8M2808.7 484.8h7.8M2816.7 484.8h0.8M2817.7 484.8h6.8M2824.7 484.8h2.8M2828.7 484.8h1.8M2831.7 484.8h0.8M2816.7 486.8h0.8M2821.7 486.8h0.8M2823.7 486.8h0.8M2826.7 486.8h0.8M2828.7 486.8h0.8M2830.7 486.8h0.8M2832.7 486.8h7.8M2840.7 486.8h0.8M2841.7 486.8h5.8M2847.7 486.8h0.8M2849.7 486.8h0.8M2850.7 486.8h2.8M2854.7 486.8h0.8M2816.7 488.8h3.8M2820.7 488.8h0.8M2821.7 488.8h9.8M2831.7 488.8h0.8M2832.7 488.8h7.8M2840.7 488.8h0.8M2841.7 488.8h0.8M2842.7 488.8h2.8M2812.7 490.8h0.8M2812.7 492.8h7.8M2821.7 492.8h0.8M2823.7 492.8h2.8M2812.7 494.8h5.8M2818.7 494.8h0.8M2835.7 494.8h1.8M2808.7 496.8h2.8M2808.7 498.8h14.8M2823.7 498.8h0.8M2824.7 498.8h6.8M2831.7 498.8h0.8M2832.7 498.8h7.8M2840.7 498.8h1.8M2808.7 504.8h3.8M2812.7 504.8h0.8M2813.7 504.8h6.8M2820.7 504.8h0.8M2821.7 504.8h14.8M2836.7 504.8h1.8M2812.7 510.8h12.8M2826.7 510.8h0.8M2842.7 510.8h2.8M2812.7 516.8h10.8M2824.7 516.8h0.8M2826.7 516.8h15.8M2842.7 516.8h0.8M2849.7 516.8h0.8M2851.7 516.8h0.8M2855.7 516.8h0.8M2858.7 516.8h0.8M2861.7 516.8h1.8M2864.7 516.8h0.8M2868.7 516.8h0.8M2873.7 516.8h0.8M2878.7 516.8h2.8M2808.7 518.8h10.8M2819.7 518.8h0.8M2820.7 518.8h6.8M2827.7 518.8h2.8M2831.7 518.8h1.8M2834.7 518.8h0.8M2816.7 520.8h6.8M2824.7 520.8h0.8M2834.7 520.8h2.8M2812.7 522.8h6.8M2819.7 522.8h0.8M2820.7 522.8h7.8M2828.7 522.8h0.8M2832.7 522.8h1.8M2812.7 524.8h6.8M2819.7 524.8h0.8M2820.7 524.8h8.8M2829.7 524.8h0.8M2833.7 524.8h1.8M2812.7 526.8h6.8M2819.7 526.8h0.8M2820.7 526.8h7.8M2828.7 526.8h0.8M2832.7 526.8h0.8M2835.7 526.8h0.8M2838.7 526.8h1.8M2815.7 530.8h0.8M2823.7 530.8h6.8M2830.7 530.8h0.8M2831.7 530.8h10.8M2843.7 530.8h2.8M2858.7 530.8h0.8M2860.7 530.8h0.8M2816.7 532.8h6.8M2823.7 532.8h0.8M2824.7 532.8h10.8M2835.7 532.8h0.8M2839.7 532.8h0.8M2844.7 532.8h1.8M2812.7 534.8h0.8M2812.7 538.8h3.8M2816.7 538.8h0.8M2817.7 538.8h6.8M2824.7 538.8h0.8M2825.7 538.8h6.8M2832.7 538.8h1.8M2812.7 540.8h7.8M2820.7 540.8h0.8M2821.7 540.8h3.8M2825.7 540.8h0.8M2826.7 540.8h6.8M2833.7 540.8h1.8M2812.7 542.8h5.8M2818.7 542.8h0.8M2835.7 542.8h1.8M2808.7 544.8h2.8M2808.7 546.8h12.8M2821.7 546.8h0.8M2822.7 546.8h6.8M2829.7 546.8h0.8M2830.7 546.8h10.8M2841.7 546.8h1.8M2812.7 552.8h11.8M2825.7 552.8h0.8M2827.7 552.8h15.8M2843.7 552.8h0.8M2850.7 552.8h0.8M2852.7 552.8h0.8M2854.7 552.8h0.8M2857.7 552.8h0.8M2862.7 552.8h1.8M2865.7 552.8h0.8M2869.7 552.8h0.8M2874.7 552.8h0.8M2879.7 552.8h2.8M2808.7 554.8h11.8M2820.7 554.8h0.8M2821.7 554.8h6.8M2828.7 554.8h2.8M2832.7 554.8h1.8M2835.7 554.8h0.8M2816.7 556.8h7.8M2825.7 556.8h0.8M2835.7 556.8h2.8M2812.7 558.8h7.8M2820.7 558.8h0.8M2821.7 558.8h7.8M2829.7 558.8h0.8M2833.7 558.8h1.8M2812.7 560.8h7.8M2820.7 560.8h0.8M2821.7 560.8h8.8M2830.7 560.8h0.8M2834.7 560.8h1.8M2812.7 562.8h7.8M2820.7 562.8h0.8M2821.7 562.8h7.8M2829.7 562.8h0.8M2831.7 562.8h0.8M2834.7 562.8h0.8M2839.7 562.8h1.8M2815.7 566.8h0.8M2823.7 566.8h7.8M2831.7 566.8h0.8M2832.7 566.8h10.8M2844.7 566.8h2.8M2859.7 566.8h0.8M2861.7 566.8h0.8M2816.7 568.8h7.8M2824.7 568.8h0.8M2825.7 568.8h10.8M2836.7 568.8h0.8M2840.7 568.8h0.8M2845.7 568.8h1.8M2812.7 570.8h0.8M2812.7 574.8h3.8M2816.7 574.8h0.8M2817.7 574.8h6.8M2824.7 574.8h0.8M2825.7 574.8h7.8M2833.7 574.8h1.8M2812.7 576.8h7.8M2820.7 576.8h0.8M2821.7 576.8h3.8M2825.7 576.8h0.8M2826.7 576.8h7.8M2834.7 576.8h1.8M2812.7 578.8h5.8M2818.7 578.8h0.8M2835.7 578.8h1.8M2808.7 580.8h2.8M2808.7 582.8h12.8M2821.7 582.8h0.8M2822.7 582.8h6.8M2829.7 582.8h0.8M2830.7 582.8h11.8M2842.7 582.8h1.8M2812.7 588.8h12.8M2826.7 588.8h0.8M2828.7 588.8h15.8M2844.7 588.8h0.8M2851.7 588.8h0.8M2853.7 588.8h0.8M2855.7 588.8h0.8M2860.7 588.8h0.8M2863.7 588.8h1.8M2866.7 588.8h0.8M2870.7 588.8h0.8M2875.7 588.8h0.8M2880.7 588.8h2.8M2808.7 590.8h12.8M2821.7 590.8h0.8M2822.7 590.8h6.8M2829.7 590.8h2.8M2833.7 590.8h1.8M2836.7 590.8h0.8M2816.7 592.8h8.8M2826.7 592.8h0.8M2836.7 592.8h2.8M2812.7 594.8h8.8M2821.7 594.8h0.8M2822.7 594.8h7.8M2830.7 594.8h0.8M2834.7 594.8h1.8M2812.7 596.8h8.8M2821.7 596.8h0.8M2822.7 596.8h8.8M2831.7 596.8h0.8M2835.7 596.8h1.8M2812.7 598.8h8.8M2821.7 598.8h0.8M2822.7 598.8h7.8M2830.7 598.8h0.8M2832.7 598.8h0.8M2837.7 598.8h0.8M2840.7 598.8h1.8M2815.7 602.8h0.8M2823.7 602.8h8.8M2832.7 602.8h0.8M2833.7 602.8h10.8M2845.7 602.8h2.8M2860.7 602.8h0.8M2862.7 602.8h0.8M2816.7 604.8h8.8M2825.7 604.8h0.8M2826.7 604.8h10.8M2837.7 604.8h0.8M2841.7 604.8h0.8M2846.7 604.8h1.8M2812.7 606.8h0.8M2812.7 610.8h3.8M2816.7 610.8h0.8M2817.7 610.8h6.8M2824.7 610.8h0.8M2825.7 610.8h8.8M2834.7 610.8h1.8M2812.7 612.8h7.8M2820.7 612.8h0.8M2821.7 612.8h3.8M2825.7 612.8h0.8M2826.7 612.8h8.8M2835.7 612.8h1.8M2812.7 614.8h5.8M2818.7 614.8h0.8M2835.7 614.8h1.8M2808.7 616.8h2.8M2808.7 618.8h12.8M2821.7 618.8h0.8M2822.7 618.8h6.8M2829.7 618.8h0.8M2830.7 618.8h12.8M2843.7 618.8h1.8M2808.7 624.8h3.8M2812.7 624.8h0.8M2813.7 624.8h6.8M2820.7 624.8h0.8M2821.7 624.8h12.8M2834.7 624.8h1.8M2808.7 628.8h5.8M2814.7 628.8h0.8M2861.7 628.8h1.8M2804.7 630.8h2.8" stroke="#d4d4d4" stroke-width="1.1" stroke-dasharray="1.5 0.5" fill="none"/><path d="M2804.7 296.8h2.8M2813.7 296.8h2.8M2804.7 302.8h2.8M2804.7 308.8h7.8M2808.7 310.8h2.8M2818.7 310.8h2.8M2808.7 324.8h5.8M2808.7 330.8h2.8M2820.7 330.8h2.8M2808.7 336.8h5.8M2808.7 342.8h2.8M2817.7 342.8h2.8M2825.7 354.8h7.8M2808.7 368.8h5.8M2808.7 384.8h2.8M2808.7 390.8h2.8M2830.7 390.8h2.8M2808.7 396.8h2.8M2823.7 396.8h2.8M2808.7 418.8h2.8M2825.7 418.8h2.8M2812.7 430.8h2.8M2823.7 430.8h2.8M2812.7 448.8h1.8M2816.7 448.8h5.8M2816.7 450.8h2.8M2816.7 452.8h2.8M2808.7 474.8h2.8M2823.7 474.8h2.8M2812.7 486.8h2.8M2817.7 486.8h2.8M2808.7 510.8h2.8M2828.7 510.8h2.8M2808.7 516.8h2.8M2812.7 520.8h2.8M2826.7 520.8h2.8M2812.7 530.8h1.8M2816.7 530.8h5.8M2808.7 552.8h2.8M2812.7 556.8h2.8M2827.7 556.8h2.8M2812.7 566.8h1.8M2816.7 566.8h5.8M2808.7 588.8h2.8M2812.7 592.8h2.8M2828.7 592.8h2.8M2812.7 602.8h1.8M2816.7 602.8h5.8" stroke="#569cd6" stroke-width="1.1" stroke-dasharray="1.5 0.5" fill="none"/><path d="M2811.7 374.8h17.8M2825.7 398.8h5.8M2827.7 420.8h7.8M2844.7 448.8h10.8M2819.7 464.8h29.8M2825.7 476.8h5.8M2819.7 494.8h15.8M2843.7 516.8h5.8M2847.7 530.8h10.8M2819.7 542.8h15.8M2844.7 552.8h5.8M2848.7 566.8h10.8M2819.7 578.8h15.8M2845.7 588.8h5.8M2849.7 602.8h10.8M2819.7 614.8h15.8M2815.7 628.8h45.8" stroke="#ce9178" stroke-width="1.1" stroke-dasharray="1.5 0.5" fill="none"/><path d="M2827.7 318.8h0.8M2837.7 318.8h0.8M2847.7 318.8h0.8M2821.7 320.8h1.8M2822.7 322.8h1.8M2827.7 334.8h0.8M2830.7 334.8h0.8M2833.7 334.8h0.8M2838.7 344.8h0.8M2850.7 344.8h0.8M2862.7 344.8h0.8M2820.7 346.8h1.8M2821.7 348.8h1.8M2826.7 400.8h2.8M2831.7 400.8h0.8M2834.7 400.8h0.8M2830.7 402.8h2.8M2835.7 402.8h2.8M2840.7 402.8h2.8M2826.7 404.8h1.8M2828.7 422.8h0.8M2831.7 422.8h0.8M2834.7 422.8h2.8M2832.7 424.8h2.8M2837.7 424.8h2.8M2842.7 424.8h2.8M2828.7 426.8h1.8M2842.7 432.8h1.8M2847.7 432.8h0.8M2843.7 434.8h0.8M2847.7 434.8h0.8M2843.7 438.8h2.8M2843.7 440.8h2.8M2843.7 442.8h2.8M2851.7 450.8h2.8M2858.7 450.8h1.8M2851.7 452.8h2.8M2858.7 452.8h2.8M2826.7 478.8h2.8M2831.7 478.8h2.8M2836.7 478.8h2.8M2830.7 480.8h2.8M2835.7 480.8h2.8M2840.7 480.8h2.8M2826.7 482.8h1.8M2825.7 486.8h0.8M2852.7 516.8h2.8M2857.7 516.8h0.8M2860.7 516.8h0.8M2865.7 516.8h2.8M2870.7 516.8h2.8M2875.7 516.8h2.8M2829.7 522.8h2.8M2830.7 524.8h2.8M2829.7 526.8h2.8M2834.7 526.8h0.8M2837.7 526.8h0.8M2836.7 532.8h2.8M2841.7 532.8h2.8M2853.7 552.8h0.8M2856.7 552.8h0.8M2859.7 552.8h2.8M2866.7 552.8h2.8M2871.7 552.8h2.8M2876.7 552.8h2.8M2830.7 558.8h2.8M2831.7 560.8h2.8M2830.7 562.8h0.8M2833.7 562.8h0.8M2836.7 562.8h2.8M2837.7 568.8h2.8M2842.7 568.8h2.8M2854.7 588.8h0.8M2857.7 588.8h2.8M2862.7 588.8h0.8M2867.7 588.8h2.8M2872.7 588.8h2.8M2877.7 588.8h2.8M2831.7 594.8h2.8M2832.7 596.8h2.8M2831.7 598.8h0.8M2834.7 598.8h2.8M2839.7 598.8h0.8M2838.7 604.8h2.8M2843.7 604.8h2.8" stroke="#b5cea8" stroke-width="1.1" stroke-dasharray="1.5 0.5" fill="none"/><path d="M2804.7 288.8h1.8M2807.7 288.8h11.8M2820.7 288.8h0.8M2822.7 288.8h13.8M2804.7 290.8h1.8M2807.7 290.8h36.8M2845.7 290.8h25.8M2804.7 294.8h1.8M2807.7 294.8h13.8M2804.7 300.8h1.8M2807.7 300.8h20.8M2829.7 300.8h15.8M2804.7 306.8h1.8M2807.7 306.8h27.8M2836.7 306.8h4.8M2842.7 306.8h6.8M2808.7 314.8h1.8M2811.7 314.8h23.8M2808.7 328.8h1.8M2811.7 328.8h3.8M2808.7 340.8h1.8M2811.7 340.8h5.8M2808.7 352.8h1.8M2811.7 352.8h21.8M2804.7 372.8h1.8M2807.7 372.8h7.8M2804.7 378.8h1.8M2807.7 378.8h6.8M2815.7 378.8h40.8M2808.7 382.8h1.8M2811.7 382.8h9.8M2808.7 388.8h1.8M2811.7 388.8h21.8M2808.7 394.8h1.8M2811.7 394.8h7.8M2808.7 416.8h1.8M2811.7 416.8h9.8M2808.7 472.8h1.8M2811.7 472.8h7.8M2808.7 502.8h1.8M2811.7 502.8h19.8M2808.7 508.8h1.8M2811.7 508.8h17.8M2808.7 514.8h1.8M2811.7 514.8h15.8M2808.7 550.8h1.8M2811.7 550.8h15.8M2808.7 586.8h1.8M2811.7 586.8h15.8M2808.7 622.8h1.8M2811.7 622.8h19.8M2804.7 634.8h1.8M2807.7 634.8h4.8M2804.7 636.8h1.8M2807.7 636.8h1.8M2810.7 636.8h59.8M2804.7 638.8h1.8M2807.7 638.8h1.8M2810.7 638.8h47.8M2804.7 640.8h1.8M2807.7 640.8h1.8M2810.7 640.8h37.8" stroke="#608b4e" stroke-width="1.1" stroke-dasharray="1.5 0.5" fill="none"/><path d="M2817.7 296.8h6.8M2822.7 310.8h5.8M2824.7 330.8h4.8M2821.7 342.8h3.8M2834.7 390.8h9.8M2827.7 396.8h5.8M2829.7 418.8h5.8M2827.7 430.8h3.8M2827.7 474.8h5.8M2832.7 510.8h9.8M2830.7 520.8h3.8M2831.7 556.8h3.8M2832.7 592.8h3.8" stroke="#4ec9b0" stroke-width="1.1" stroke-dasharray="1.5 0.5" fill="none"/></svg>
<div class="a" style="left:2916.2px;top:288px;width:1.2px;height:1261px;background:#3d3d3d"></div>
<div class="a" style="left:2917px;top:1323.5px;width:23px;height:3.5px;background:#7a7a7a"></div>
<div class="a" style="left:2917px;top:288px;width:24px;height:1px;background:#3a3a3a"></div>
<div class="a" style="left:749.5px;top:1555.6px;width:2193.5px;height:59.4px;background:#414141"></div>
<div class="a" style="left:752.5px;top:1615px;width:2190.5px;height:395px;background:#2d2d2d"></div>
<div class="t" style="left:815px;top:1576px;font-size:22.75px;color:#d4d4d4">运行日志</div>
<div class="a" style="left:932px;top:1569px;width:235px;height:33.5px;box-sizing:border-box;border:1.75px solid #5c5c5c;border-radius:3px;background:#404040"></div>
<div class="a" style="left:933.75px;top:1570.75px;width:180px;height:30px;background:#2b2b2b;border-right:1.75px solid #5c5c5c"></div>
<div class="t" style="left:935px;top:1573.5px;font-size:23px;color:#dcdcdc">全部</div>
<div class="a" style="left:1132px;top:1580.5px;width:0;height:0;border-top:10.5px solid #b4b4b4;border-left:9px solid transparent;border-right:9px solid transparent"></div>
<svg style="left:770px;top:1569px" width="34" height="35" viewBox="0 0 34 35"><rect x="0.900" y="1" width="31.700" height="32.400" rx="3.500" fill="#e9e9e9"/><path d="M6.300 9.200H9.300M11.800 9.200H26.500M6.300 15.300H9.300M11.800 15.300H26.500" stroke="#3c3c3c" stroke-width="2.400"/></svg>
<svg style="left:1201px;top:1567.5px" width="32" height="37" viewBox="0 0 32 37"><g fill="none" stroke="#2f97d0" stroke-width="2.100" stroke-linejoin="round" stroke-linecap="round"><path d="M12.800 14V4.500a3.200 3.200 0 0 1 6.400 0V14H24.500a3 3 0 0 1 3 3V19.500H4.500V17a3 3 0 0 1 3-3z"/><path d="M5.500 19.500C5.500 27 4 31 2.200 34.500H25.500C28 31 28.500 25 27 19.500M10.500 34C12 31.500 12.800 29 13 26.500M18 34C19.500 31.500 20.300 29 20.500 26.500"/></g></svg>
<svg style="left:1266.3px;top:1574.1px" width="31" height="31" viewBox="0 0 31 31"><g fill="none" stroke="#e4e4e4" stroke-width="2.4" stroke-linecap="round" stroke-linejoin="round"><path d="M11.500 2.100H6a4 4 0 0 0-4 4V24a4 4 0 0 0 4 4H24a4 4 0 0 0 4-4V18.500"/><rect x="19" y="2.100" width="9" height="9" rx="3"/><path d="M3.600 26.400L15.200 14.700M7.600 14.300H15.600V22.400"/></g></svg>
<div class="rl" style="left:792.5px;top:1634.5px">【系统日志】启动<span style="font-size:22.4px">start.js</span></div>
<div class="rl" style="left:792.5px;top:1688px">【系统日志】<span style="font-size:23.4px">Debug</span>变量清理成功</div>
<div class="rl" style="left:795.5px;top:1741px;color:#a9b7c6"><span style="font-size:22.4px">[2025-09-15 08:13:26] </span><span style="color:#ffff00;text-decoration:underline;font-size:23.5px">&nbsp;#0&nbsp;</span>【<span style="font-size:22.4px">String</span>】示例已加载完成，您可以通过按钮创建和管理线条</div>
<div class="rl" style="left:792.5px;top:1794.5px">【系统日志】按下<span style="font-size:22.4px">{X=55,Y=71}</span></div>
<div class="a" style="left:2943px;top:1555.6px;width:7px;height:455px;background:#3c3c3c"></div>
<div class="a" style="left:2946.5px;top:240px;width:3.5px;height:1316px;background:#3e3e3e"></div>
<div class="a" style="left:2949px;top:192px;width:1px;height:48px;background:#3a3a3a"></div>
<div class="a" style="left:2950px;top:240px;width:278px;height:1770px;background:#303030"></div>
<div class="a" style="left:2950px;top:240px;width:278px;height:47px;background:#363636"></div>
<div class="a" style="left:2959px;top:244px;width:300px;height:37.5px;box-sizing:border-box;border:1.75px solid #8c8c8c;border-radius:9px;background:#404040"></div>
<svg style="left:2965px;top:250px" width="26" height="26" viewBox="0 0 26 26"><circle cx="11.5" cy="11.5" r="8.6" fill="none" stroke="#d0d0d0" stroke-width="2.2"/><path d="M17.5 17.5L22 22.3" stroke="#d0d0d0" stroke-width="2.6" stroke-linecap="round"/></svg>
<div class="row" style="top:289.0px"><i></i><div class="x"><span class="l" style="font-size:25.0px">HID</span>键鼠模块<span class="l" style="font-size:25.0px">[device]</span></div></div>
<div class="row" style="top:343.25px"><i></i><div class="x"><span class="l" style="font-size:24.91px">HID</span>键鼠模块<span class="l" style="font-size:24.91px">[hid]</span></div></div>
<div class="row" style="top:397.5px"><i></i><div class="x"><span class="l" style="font-size:24.99px">iosApp</span>管理<span class="l" style="font-size:24.99px">[app]</span></div></div>
<div class="row" style="top:451.75px"><i></i><div class="x"><span class="l" style="font-size:25.0px">JS</span>代码运行时<span class="l" style="font-size:25.0px">[selfRun]</span></div></div>
<div class="row" style="top:506.0px"><i></i><div class="x"><span class="l" style="font-size:25.08px">Map </span>数据管理<span class="l" style="font-size:25.08px">[map]</span></div></div>
<div class="row" style="top:560.25px"><i></i><div class="x"><span class="l" style="font-size:25.0px">Ocr</span>识别结果<span class="l" style="font-size:25.0px">[OcrResult]</span></div></div>
<div class="row" style="top:614.5px"><i></i><div class="x"><span class="l" style="font-size:24.5px;letter-spacing:-1.56px">OCR</span>文字识别<span class="l" style="font-size:24.5px;letter-spacing:-1.56px">[OCR]</span></div></div>
<div class="row" style="top:668.75px"><i></i><div class="x"><span class="l" style="font-size:25.0px">OkHttp </span>网络请求管理<span class="l" style="font-size:25.0px">[OkHttp]</span></div></div>
<div class="row" style="top:723.0px"><i></i><div class="x"><span class="l" style="font-size:25.0px">opencv,Mat</span>格式图像处理<span class="l" style="font-size:25.0px">[opencv]</span></div></div>
<div class="row" style="top:777.25px"><i></i><div class="x"><span class="l" style="font-size:25.0px">TomatoOCR</span>文字识别<span class="l" style="font-size:25.0px">[TomatoOCR]</span></div></div>
<div class="row" style="top:831.5px"><i></i><div class="x"><span class="l" style="font-size:26.42px">txt</span>文件读写<span class="l" style="font-size:26.42px">[txt]</span></div></div>
<div class="row" style="top:885.75px"><i></i><div class="x"><span class="l" style="font-size:25.0px">UI-TAB</span>界面视图<span class="l" style="font-size:25.0px">[TabView]</span></div></div>
<div class="row" style="top:940.0px"><i></i><div class="x"><span class="l" style="font-size:25.31px">UI-</span>按钮<span class="l" style="font-size:25.31px">[Button]</span></div></div>
<div class="row" style="top:994.25px"><i></i><div class="x"><span class="l" style="font-size:24.27px">UI-</span>标签类<span class="l" style="font-size:24.27px">[Label]</span></div></div>
<div class="row" style="top:1048.5px"><i></i><div class="x"><span class="l" style="font-size:25.0px">UI-</span>垂直容器<span class="l" style="font-size:25.0px">[Vertical]</span></div></div>
<div class="row" style="top:1102.75px"><i></i><div class="x"><span class="l" style="font-size:25.0px">UI-</span>单选按钮类<span class="l" style="font-size:25.0px">[RadioButton]</span></div></div>
<div class="row" style="top:1157.0px"><i></i><div class="x"><span class="l" style="font-size:25.0px">UI-</span>单选按钮组类<span class="l" style="font-size:25.0px">[RadioGroup]</span></div></div>
<div class="row" style="top:1211.25px"><i></i><div class="x"><span class="l" style="font-size:25.0px">UI-</span>复选框类<span class="l" style="font-size:25.0px">[CheckBox]</span></div></div>
<div class="row" style="top:1265.5px"><i></i><div class="x"><span class="l" style="font-size:25.0px">UI-</span>界面视图<span class="l" style="font-size:25.0px">[IOSView]</span></div></div>
<div class="row" style="top:1319.75px"><i></i><div class="x"><span class="l" style="font-size:23.6px">UI-</span>空白站位<span class="l" style="font-size:23.6px">[Space]</span></div></div>
<div class="row" style="top:1374.0px"><i></i><div class="x"><span class="l" style="font-size:25.53px">UI-</span>输入框类<span class="l" style="font-size:25.53px">[Input]</span></div></div>
<div class="row" style="top:1428.25px"><i></i><div class="x"><span class="l" style="font-size:25.0px">UI-</span>水平容器<span class="l" style="font-size:25.0px">[Horizontal]</span></div></div>
<div class="row" style="top:1482.5px"><i></i><div class="x"><span class="l" style="font-size:25.0px">WebView </span>控件<span class="l" style="font-size:25.0px">[WebView]</span></div></div>
<div class="row" style="top:1536.75px"><i></i><div class="x"><span class="l" style="font-size:25.0px">YoloV5</span>目标检测<span class="l" style="font-size:25.0px">[YoloV5]</span></div></div>
<div class="row" style="top:1591.0px"><i></i><div class="x">打印<span class="l" style="font-size:26.39px">[print]</span></div></div>
<div class="row" style="top:1645.25px"><i></i><div class="x">检测目标类<span class="l" style="font-size:24.88px">[Detect]</span></div></div>
<div class="row" style="top:1699.5px"><i></i><div class="x">剪贴板类<span class="l" style="font-size:25.25px">[clipboard]</span></div></div>
<div class="row" style="top:1753.75px"><i></i><div class="x">脚本项目<span class="l" style="font-size:25.44px">[project]</span></div></div>
<div class="row" style="top:1808.0px"><i></i><div class="x">矩形类<span class="l" style="font-size:24.85px">[rect]</span></div></div>
<div class="row" style="top:1862.25px"><i></i><div class="x">快捷指令<span class="l" style="font-size:25.28px">[shortcut]</span></div></div>
<div class="row" style="top:1916.5px"><i></i><div class="x">快捷指令代理服务<span class="l" style="font-size:25.0px">[shortcutProxy]</span></div></div>
<div class="row" style="top:1970.75px"><i></i><div class="x">配置<span class="l" style="font-size:25.43px">[config]</span></div></div>
<div class="a" style="left:2951px;top:2005.5px;width:300px;height:10px;border-radius:5px;background:#9e9e9e"></div>
</div>
<div id="code" style="position:absolute;left:756px;top:287.8px;width:2041px;height:1267.7px;background:#2e2e2e;overflow:hidden"><div style="position:absolute;left:-756px;top:-287.8px;width:3228px;height:2010px"><div class="a" style="left:756px;top:287.8px;width:2041px;height:7px;background:linear-gradient(#1d1d1d,rgba(46,46,46,0))"></div><div class="ln" style="top:289.0px">141</div>
<div class="g" style="left:842.3px;top:289.0px;height:33.25px"></div>
<div class="g" style="left:869.25px;top:289.0px;height:33.25px"></div>
<div class="g" style="left:896.2px;top:289.0px;height:33.25px"></div>
<div class="g" style="left:923.15px;top:289.0px;height:33.25px"></div>
<div class="g" style="left:950.1px;top:289.0px;height:33.25px"></div>
<div class="g" style="left:977.05px;top:289.0px;height:33.25px"></div>
<div class="code" style="top:289.0px">            blueLine.setPosition<span class="b3">(</span><span class="n">200</span>, <span class="n">200</span><span class="b3">)</span>;</div>
<div class="ln" style="top:322.25px">142</div>
<div class="g" style="left:842.3px;top:322.25px;height:33.25px"></div>
<div class="g" style="left:869.25px;top:322.25px;height:33.25px"></div>
<div class="g" style="left:896.2px;top:322.25px;height:33.25px"></div>
<div class="g" style="left:923.15px;top:322.25px;height:33.25px"></div>
<div class="code" style="top:322.25px">        <span class="b2">}</span></div>
<div class="ln" style="top:355.5px">143</div>
<div class="g" style="left:842.3px;top:355.5px;height:33.25px"></div>
<div class="g" style="left:869.25px;top:355.5px;height:33.25px"></div>
<div class="g" style="left:896.2px;top:355.5px;height:33.25px"></div>
<div class="g" style="left:923.15px;top:355.5px;height:33.25px"></div>
<div class="ln" style="top:388.75px">144</div>
<div class="g" style="left:842.3px;top:388.75px;height:33.25px"></div>
<div class="g" style="left:869.25px;top:388.75px;height:33.25px"></div>
<div class="g" style="left:896.2px;top:388.75px;height:33.25px"></div>
<div class="g" style="left:923.15px;top:388.75px;height:33.25px"></div>
<div class="code" style="top:388.75px">        view.addView<span class="b2">(</span>blueLine<span class="b2">)</span>;</div>
<div class="ln" style="top:422.0px">145</div>
<div class="g" style="left:842.3px;top:422.0px;height:33.25px"></div>
<div class="g" style="left:869.25px;top:422.0px;height:33.25px"></div>
<div class="g" style="left:896.2px;top:422.0px;height:33.25px"></div>
<div class="g" style="left:923.15px;top:422.0px;height:33.25px"></div>
<div class="code" style="top:422.0px">        allLines.push<span class="b2">(</span>blueLine<span class="b2">)</span>;</div>
<div class="ln" style="top:455.25px">146</div>
<div class="g" style="left:842.3px;top:455.25px;height:33.25px"></div>
<div class="g" style="left:869.25px;top:455.25px;height:33.25px"></div>
<div class="g" style="left:896.2px;top:455.25px;height:33.25px"></div>
<div class="g" style="left:923.15px;top:455.25px;height:33.25px"></div>
<div class="code" style="top:455.25px">        printl<span class="b2">(</span><span class="s">"<span class="z">已创建蓝色线条</span>"</span><span class="b2">)</span>;</div>
<div class="ln" style="top:488.5px">147</div>
<div class="g" style="left:842.3px;top:488.5px;height:33.25px"></div>
<div class="g" style="left:869.25px;top:488.5px;height:33.25px"></div>
<div class="code" style="top:488.5px">    <span class="b1">}</span><span class="b3">)</span>;</div>
<div class="ln" style="top:521.75px">148</div>
<div class="g" style="left:842.3px;top:521.75px;height:33.25px"></div>
<div class="g" style="left:869.25px;top:521.75px;height:33.25px"></div>
<div class="code" style="top:521.75px">    iconContainer.addView<span class="b3">(</span>blueLineIcon<span class="b3">)</span>;</div>
<div class="ln" style="top:555.0px">149</div>
<div class="g" style="left:842.3px;top:555.0px;height:33.25px"></div>
<div class="g" style="left:869.25px;top:555.0px;height:33.25px"></div>
<div class="ln" style="top:588.25px">150</div>
<div class="g" style="left:842.3px;top:588.25px;height:33.25px"></div>
<div class="g" style="left:869.25px;top:588.25px;height:33.25px"></div>
<div class="code" style="top:588.25px">    <span class="c">// <span class="z">绿色线条图标按钮</span></span></div>
<div class="ln" style="top:621.5px">151</div>
<div class="g" style="left:842.3px;top:621.5px;height:33.25px"></div>
<div class="g" style="left:869.25px;top:621.5px;height:33.25px"></div>
<div class="code" style="top:621.5px">    <span class="k">var</span> greenLineIcon = createIconButton<span class="b3">(</span><span class="s">"<span class="z">绿色</span>"</span>, <span class="b1">[</span><span class="n">0</span>, <span class="n">255</span>, <span class="n">0</span><span class="b1">]</span>, <span class="b1">[</span><span class="n">200</span>, <span class="n">255</span>, <span class="n">200</span><span class="b1">]</span><span class="b3">)</span>;</div>
<div class="ln" style="top:654.75px">152</div>
<div class="g" style="left:842.3px;top:654.75px;height:33.25px"></div>
<div class="g" style="left:869.25px;top:654.75px;height:33.25px"></div>
<div class="code" style="top:654.75px">    greenLineIcon.onClick<span class="b3">(</span><span class="b1">(</span><span class="b1">)</span> =&gt; <span class="b1">{</span></div>
<div class="ln" style="top:688.0px">153</div>
<div class="g" style="left:842.3px;top:688.0px;height:33.25px"></div>
<div class="g" style="left:869.25px;top:688.0px;height:33.25px"></div>
<div class="g" style="left:896.2px;top:688.0px;height:33.25px"></div>
<div class="g" style="left:923.15px;top:688.0px;height:33.25px"></div>
<div class="code" style="top:688.0px">        <span class="k">var</span> greenLine = <span class="k">new</span> <span class="ty">Line</span><span class="b2">(</span><span class="b2">)</span>;</div>
<div class="ln" style="top:721.25px">154</div>
<div class="g" style="left:842.3px;top:721.25px;height:33.25px"></div>
<div class="g" style="left:869.25px;top:721.25px;height:33.25px"></div>
<div class="g" style="left:896.2px;top:721.25px;height:33.25px"></div>
<div class="g" style="left:923.15px;top:721.25px;height:33.25px"></div>
<div class="code" style="top:721.25px">        greenLine.setWidth<span class="b2">(</span><span class="n">5.0</span><span class="b2">)</span>;</div>
<div class="ln" style="top:754.5px">155</div>
<div class="g" style="left:842.3px;top:754.5px;height:33.25px"></div>
<div class="g" style="left:869.25px;top:754.5px;height:33.25px"></div>
<div class="g" style="left:896.2px;top:754.5px;height:33.25px"></div>
<div class="g" style="left:923.15px;top:754.5px;height:33.25px"></div>
<div class="code" style="top:754.5px">        greenLine.setHeight<span class="b2">(</span><span class="n">2.0</span><span class="b2">)</span>;</div>
<div class="ln" style="top:787.75px">156</div>
<div class="g" style="left:842.3px;top:787.75px;height:33.25px"></div>
<div class="g" style="left:869.25px;top:787.75px;height:33.25px"></div>
<div class="g" style="left:896.2px;top:787.75px;height:33.25px"></div>
<div class="g" style="left:923.15px;top:787.75px;height:33.25px"></div>
<div class="code" style="top:787.75px">        greenLine.setColor<span class="b2">(</span><span class="n">0</span>, <span class="n">255</span>, <span class="n">0</span><span class="b2">)</span>;</div>
<div class="ln" style="top:821.0px">157</div>
<div class="g" style="left:842.3px;top:821.0px;height:33.25px"></div>
<div class="g" style="left:869.25px;top:821.0px;height:33.25px"></div>
<div class="g" style="left:896.2px;top:821.0px;height:33.25px"></div>
<div class="g" style="left:923.15px;top:821.0px;height:33.25px"></div>
<div class="ln" style="top:854.25px">158</div>
<div class="g" style="left:842.3px;top:854.25px;height:33.25px"></div>
<div class="g" style="left:869.25px;top:854.25px;height:33.25px"></div>
<div class="g" style="left:896.2px;top:854.25px;height:33.25px"></div>
<div class="g" style="left:923.15px;top:854.25px;height:33.25px"></div>
<div class="code" style="top:854.25px">        <span class="k">if</span> <span class="b2">(</span><span class="k">typeof</span> greenLine.setPosition !== <span class="s">'undefined'</span><span class="b2">)</span> <span class="b2">{</span></div>
<div class="ln" style="top:887.5px">159</div>
<div class="g" style="left:842.3px;top:887.5px;height:33.25px"></div>
<div class="g" style="left:869.25px;top:887.5px;height:33.25px"></div>
<div class="g" style="left:896.2px;top:887.5px;height:33.25px"></div>
<div class="g" style="left:923.15px;top:887.5px;height:33.25px"></div>
<div class="g" style="left:950.1px;top:887.5px;height:33.25px"></div>
<div class="g" style="left:977.05px;top:887.5px;height:33.25px"></div>
<div class="code" style="top:887.5px">            greenLine.setPosition<span class="b3">(</span><span class="n">300</span>, <span class="n">200</span><span class="b3">)</span>;</div>
<div class="ln" style="top:920.75px">160</div>
<div class="g" style="left:842.3px;top:920.75px;height:33.25px"></div>
<div class="g" style="left:869.25px;top:920.75px;height:33.25px"></div>
<div class="g" style="left:896.2px;top:920.75px;height:33.25px"></div>
<div class="g" style="left:923.15px;top:920.75px;height:33.25px"></div>
<div class="code" style="top:920.75px">        <span class="b2">}</span></div>
<div class="ln" style="top:954.0px">161</div>
<div class="g" style="left:842.3px;top:954.0px;height:33.25px"></div>
<div class="g" style="left:869.25px;top:954.0px;height:33.25px"></div>
<div class="g" style="left:896.2px;top:954.0px;height:33.25px"></div>
<div class="g" style="left:923.15px;top:954.0px;height:33.25px"></div>
<div class="ln" style="top:987.25px">162</div>
<div class="g" style="left:842.3px;top:987.25px;height:33.25px"></div>
<div class="g" style="left:869.25px;top:987.25px;height:33.25px"></div>
<div class="g" style="left:896.2px;top:987.25px;height:33.25px"></div>
<div class="g" style="left:923.15px;top:987.25px;height:33.25px"></div>
<div class="code" style="top:987.25px">        view.addView<span class="b2">(</span>greenLine<span class="b2">)</span>;</div>
<div class="ln" style="top:1020.5px">163</div>
<div class="g" style="left:842.3px;top:1020.5px;height:33.25px"></div>
<div class="g" style="left:869.25px;top:1020.5px;height:33.25px"></div>
<div class="g" style="left:896.2px;top:1020.5px;height:33.25px"></div>
<div class="g" style="left:923.15px;top:1020.5px;height:33.25px"></div>
<div class="code" style="top:1020.5px">        allLines.push<span class="b2">(</span>greenLine<span class="b2">)</span>;</div>
<div class="ln" style="top:1053.75px">164</div>
<div class="g" style="left:842.3px;top:1053.75px;height:33.25px"></div>
<div class="g" style="left:869.25px;top:1053.75px;height:33.25px"></div>
<div class="g" style="left:896.2px;top:1053.75px;height:33.25px"></div>
<div class="g" style="left:923.15px;top:1053.75px;height:33.25px"></div>
<div class="code" style="top:1053.75px">        printl<span class="b2">(</span><span class="s">"<span class="z">已创建绿色线条</span>"</span><span class="b2">)</span>;</div>
<div class="ln" style="top:1087.0px">165</div>
<div class="g" style="left:842.3px;top:1087.0px;height:33.25px"></div>
<div class="g" style="left:869.25px;top:1087.0px;height:33.25px"></div>
<div class="code" style="top:1087.0px">    <span class="b1">}</span><span class="b3">)</span>;</div>
<div class="ln" style="top:1120.25px">166</div>
<div class="g" style="left:842.3px;top:1120.25px;height:33.25px"></div>
<div class="g" style="left:869.25px;top:1120.25px;height:33.25px"></div>
<div class="code" style="top:1120.25px">    iconContainer.addView<span class="b3">(</span>greenLineIcon<span class="b3">)</span>;</div>
<div class="ln" style="top:1153.5px">167</div>
<div class="g" style="left:842.3px;top:1153.5px;height:33.25px"></div>
<div class="g" style="left:869.25px;top:1153.5px;height:33.25px"></div>
<div class="ln" style="top:1186.75px">168</div>
<div class="g" style="left:842.3px;top:1186.75px;height:33.25px"></div>
<div class="g" style="left:869.25px;top:1186.75px;height:33.25px"></div>
<div class="code" style="top:1186.75px">    <span class="c">// <span class="z">将图标容器添加到视图</span></span></div>
<div class="ln" style="top:1220.0px">169</div>
<div class="g" style="left:842.3px;top:1220.0px;height:33.25px"></div>
<div class="g" style="left:869.25px;top:1220.0px;height:33.25px"></div>
<div class="code" style="top:1220.0px">    view.addView<span class="b3">(</span>iconContainer<span class="b3">)</span>;</div>
<div class="ln" style="top:1253.25px">170</div>
<div class="g" style="left:842.3px;top:1253.25px;height:33.25px"></div>
<div class="g" style="left:869.25px;top:1253.25px;height:33.25px"></div>
<div class="ln" style="top:1286.5px">171</div>
<div class="g" style="left:842.3px;top:1286.5px;height:33.25px"></div>
<div class="g" style="left:869.25px;top:1286.5px;height:33.25px"></div>
<div class="code" style="top:1286.5px">    printl<span class="b3">(</span><span class="s">"<span class="z">示例已加载完成，您可以通过按钮创建和管理线条</span>"</span><span class="b3">)</span>;</div>
<div class="ln" style="top:1319.75px">172</div>
<div class="code" style="top:1319.75px"><span class="b2">}</span><span class="b1">)</span>;</div>
<div class="ln" style="top:1353.0px">173</div>
<div class="ln" style="top:1386.25px">174</div>
<div class="code" style="top:1386.25px"><span class="c">// <span class="z">注意</span>:</span></div>
<div class="ln" style="top:1419.5px">175</div>
<div class="code" style="top:1419.5px"><span class="c">// 1. <span class="z">示例中的</span>setPosition<span class="z">方法是假设的，实际使用时请根据</span>API<span class="z">文档调整</span></span></div>
<div class="ln" style="top:1452.75px">176</div>
<div class="code" style="top:1452.75px"><span class="c">// 2. <span class="z">线条的显示效果可能因实际的视图渲染机制而有所不同</span></span></div>
<div class="a" style="left:843px;top:1483.4px;width:1954px;height:32px;box-sizing:border-box;border-top:3px solid #272727;border-bottom:3px solid #272727;border-left:2px solid #272727"></div>
<div class="ln" style="top:1486.0px;color:#c6c6c6">177</div>
<div class="code" style="top:1486.0px"><span class="c">// 3. <span class="z">如需关闭视图，可以调用</span>vc.dismiss()<span class="z">方法</span></span></div></div></div>
</body></html>
